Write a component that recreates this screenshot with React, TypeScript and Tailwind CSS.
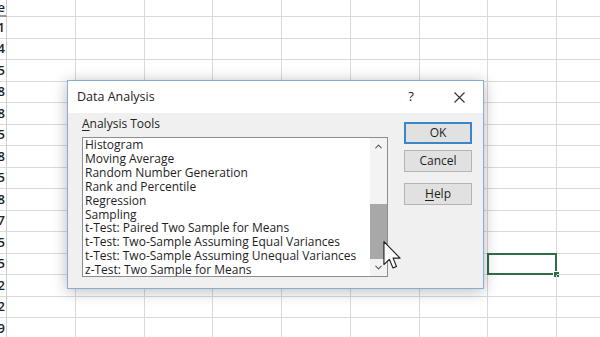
import { ChevronUp, ChevronDown } from "lucide-react";

const colA = ["Value", "231", "144", "95", "118", "208", "165", "88", "135", "98", "147", "75", "205", "122", "62", "119"];
const dataCols = 9;

const tools = [
  "Histogram",
  "Moving Average",
  "Random Number Generation",
  "Rank and Percentile",
  "Regression",
  "Sampling",
  "t-Test: Paired Two Sample for Means",
  "t-Test: Two-Sample Assuming Equal Variances",
  "t-Test: Two-Sample Assuming Unequal Variances",
  "z-Test: Two Sample for Means",
];

function Sheet() {
  return (
    <div className="grid grid-cols-[7px_repeat(9,68.75px)] grid-rows-[17px_repeat(15,21.5px)]">
      {colA.map((v, r) => (
        <>
          <div
            key={`a-${r}`}
            className={`flex items-center justify-end overflow-hidden border-r border-[#cfcfcf] pr-[1px] text-[13px] font-semibold text-[#222] ${
              r === 0 ? "border-b-2 border-b-[#9a9a9a]" : "border-b border-b-[#dadada]"
            }`}
          >
            <span className="whitespace-nowrap">{v}</span>
          </div>
          {Array.from({ length: dataCols }).map((_, c) => (
            <div key={`c-${r}-${c}`} className="relative border-r border-b border-[#dadada]">
              {r === 12 && c === 7 && (
                <>
                  <div className="absolute -left-[1px] -top-[1px] -right-[1px] -bottom-[1px] border-2 border-[#2b6e48]" />
                  <div className="absolute -right-[4px] -bottom-[4px] h-[7px] w-[7px] border border-white bg-[#2b6e48]" />
                </>
              )}
            </div>
          ))}
        </>
      ))}
    </div>
  );
}

function DialogButton({ children, primary }: { children: React.ReactNode; primary?: boolean }) {
  return (
    <div
      className={`flex h-[22px] w-[68px] items-center justify-center bg-[#e1e1e1] text-[12px] text-[#1e1e1e] ${
        primary ? "border-2 border-[#3b86c9]" : "border border-[#b4b4b4]"
      }`}
    >
      {children}
    </div>
  );
}

function DataAnalysisDialog() {
  return (
    <div className="absolute left-[67px] top-[80px] flex h-[209px] w-[417px] flex-col border border-[#86acd8] bg-[#f0f0f0] shadow-[0_2px_14px_rgba(0,0,0,0.28)]">
      {/* Title bar */}
      <div className="flex h-[32px] items-center bg-white pl-[9px] pr-[1px]">
        <span className="text-[12.5px] text-[#222]">Data Analysis</span>
        <div className="ml-auto flex h-full w-[46px] items-center justify-center text-[13px] text-[#222]">?</div>
        <div className="ml-[2px] flex h-full w-[46px] items-center justify-center">
          <svg width="11" height="11" viewBox="0 0 11 11">
            <path d="M0.5 0.5 L10.5 10.5 M10.5 0.5 L0.5 10.5" stroke="#333" strokeWidth="1.1" />
          </svg>
        </div>
      </div>

      {/* Body */}
      <div className="flex flex-1 pl-[14px] pr-[11px]">
        <div className="flex flex-col pt-[4px]">
          <div className="text-[12px] leading-[14px] text-[#222]">
            <span className="underline underline-offset-2">A</span>nalysis Tools
          </div>
          <div className="mt-[6px] flex h-[140px] w-[306px] border border-[#8a8d93] bg-white">
            <div className="flex-1 overflow-hidden pl-[2px]">
              {tools.map((t) => (
                <div key={t} className="whitespace-nowrap text-[12px] leading-[13.9px] text-[#1e1e1e]">
                  {t}
                </div>
              ))}
            </div>
            {/* Scrollbar */}
            <div className="flex w-[17px] flex-col bg-[#f3f3f3]">
              <div className="flex h-[17px] items-center justify-center">
                <ChevronUp size={11} strokeWidth={2.2} className="text-[#555]" />
              </div>
              <div className="flex flex-1 flex-col justify-end">
                <div className="h-[55px] bg-[#a8a8a8]" />
              </div>
              <div className="flex h-[17px] items-center justify-center">
                <ChevronDown size={11} strokeWidth={2.2} className="text-[#555]" />
              </div>
            </div>
          </div>
        </div>

        <div className="ml-auto flex flex-col pt-[9px]">
          <DialogButton primary>OK</DialogButton>
          <div className="mt-[6px]">
            <DialogButton>Cancel</DialogButton>
          </div>
          <div className="mt-[11px]">
            <DialogButton>
              <span>
                <span className="underline underline-offset-2">H</span>elp
              </span>
            </DialogButton>
          </div>
        </div>
      </div>
    </div>
  );
}

export default function App() {
  return (
    <div
      className="relative h-[337px] w-[600px] overflow-hidden bg-white"
      style={{ fontFamily: '"Open Sans", "Noto Sans", sans-serif' }}
    >
      <Sheet />
      <DataAnalysisDialog />

      {/* Mouse pointer */}
      <svg
        className="absolute left-[383px] top-[241px]"
        width="19"
        height="30"
        viewBox="0 0 13 21"
      >
        <path
          d="M0.5 0.5 V16.5 L4.3 12.8 L6.8 18.8 L9.3 17.8 L6.9 12 H11.8 Z"
          fill="white"
          stroke="#222"
          strokeWidth="0.8"
          strokeLinejoin="round"
        />
      </svg>
    </div>
  );
}
